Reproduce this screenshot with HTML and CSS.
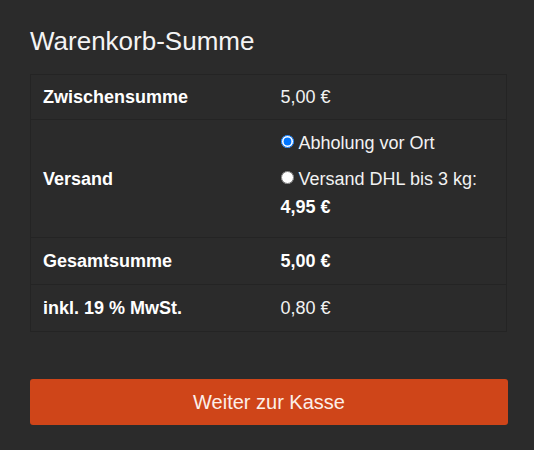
FILE: index.html
```html
<!DOCTYPE html>
<html lang="de">
<head>
  <meta charset="UTF-8" />
  <meta name="viewport" content="width=device-width, initial-scale=1.0"/>
  <title>Warenkorb</title>
  <link rel="stylesheet" href="styles.css">
</head>
<body>
  <div class="cart-totals">
    <h2>Warenkorb-Summe</h2>
    <table class="totals">
      <tr>
        <th>Zwischensumme</th>
        <td>5,00&nbsp;€</td>
      </tr>
      <tr class="shipping">
        <th>Versand</th>
        <td>
          <ul class="methods">
            <li><label><input type="radio" name="shipping" checked />Abholung vor Ort</label></li>
            <li><label><input type="radio" name="shipping" />Versand DHL bis 3 kg: <strong>4,95&nbsp;€</strong></label></li>
          </ul>
        </td>
      </tr>
      <tr>
        <th>Gesamtsumme</th>
        <td><strong>5,00&nbsp;€</strong></td>
      </tr>
      <tr>
        <th>inkl. 19 % MwSt.</th>
        <td>0,80&nbsp;€</td>
      </tr>
    </table>
    <button class="checkout">Weiter zur Kasse</button>
  </div>
</body>
</html>
```

FILE: styles.css
```css
* {
  box-sizing: border-box;
  font-family: "Liberation Sans", Arial, sans-serif;
}

body {
  background: #2b2b2b;
  color: #f2f2f2;
  margin: 0;
}

.cart-totals {
  width: 478px;
  margin-left: 30px;
}

h2 {
  font-size: 26px;
  font-weight: normal;
  line-height: 1.2;
  margin: 26px 0 17px;
  color: #f4f4f4;
}

.totals {
  width: 477px;
  border-collapse: collapse;
  table-layout: fixed;
  border: 1px solid #242424;
  font-size: 18px;
  line-height: 28px;
}

.totals tr + tr {
  border-top: 1px solid #242424;
}

.totals th,
.totals td {
  padding: 9px 12px;
  text-align: left;
  vertical-align: middle;
}

.totals tr:first-child th,
.totals tr:first-child td {
  padding: 8px 12px;
}

.totals th {
  font-weight: bold;
  color: #ffffff;
}

.totals td {
  color: #f2f2f2;
}

.totals strong {
  color: #ffffff;
}

.methods {
  list-style: none;
  margin: 0;
  padding: 0;
}

.methods li {
  margin-bottom: 7.5px;
}

.methods input {
  margin: 0 5px 0 0;
  width: 13px;
  height: 13px;
  vertical-align: 1px;
}

.checkout {
  display: block;
  width: 478px;
  height: 46px;
  margin-top: 47px;
  background-color: #cf4519;
  color: #fcefe9;
  border: none;
  border-radius: 3px;
  font-size: 20px;
  cursor: pointer;
}

.checkout:hover {
  background-color: #b93c14;
}
```
